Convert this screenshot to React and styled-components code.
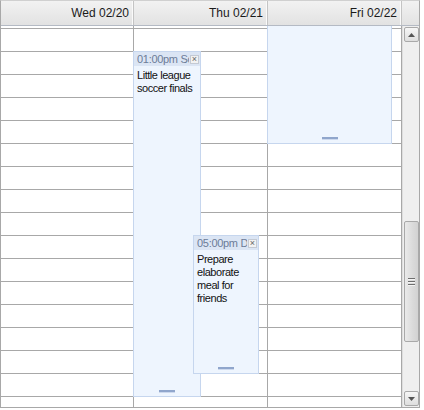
import React from "react";
import styled, {createGlobalStyle} from "styled-components";

const GlobalStyle = createGlobalStyle`
  html, body {
    margin: 0;
    padding: 0;
    background: #ffffff;
  }
  body {
    font-family: "Liberation Sans", Arial, sans-serif;
  }
`;

const ROW = 23;
const SCROLL_OFFSET = 20;

const days = [
    {label: "Wed 02/20", events: []},
    {
        label: "Thu 02/21", events: [
            {id: 1, title: "01:00pm Soccer", text: "Little league soccer finals", start: 2, rows: 15, left: -1, width: 68},
            {id: 2, title: "05:00pm Dinner", text: "Prepare elaborate meal for friends", start: 10, rows: 6, left: 59, width: 66},
        ]
    },
    {
        label: "Fri 02/22", events: [
            {id: 3, title: "", text: "", start: -1, rows: 7, left: -1, width: 125},
        ]
    },
];

const Calendar = styled.div`
  width: 420px;
  height: 408px;
  box-sizing: border-box;
  border: 1px solid #a8a8a8;
  border-top-color: #d0d0d0;
  display: flex;
  flex-direction: column;
  background: #ffffff;
  overflow: hidden;
`;

const HeaderRow = styled.div`
  display: grid;
  grid-template-columns: 133px 134px 134px 1fr;
  height: 24px;
  border-bottom: 1px solid #b4bac4;
  background: linear-gradient(to bottom, #f2f2f2, #e2e2e2);
`;

const HeaderCell = styled.div`
  display: flex;
  align-items: center;
  justify-content: flex-end;
  padding-right: 4px;
  font-size: 12px;
  color: #1a1a1a;
  white-space: nowrap;
  border-right: ${props => props.last ? 'none' : '1px solid #c4c4c4'};
  box-shadow: ${props => props.last ? 'none' : 'inset -1px 0 0 #fafafa'};
`;

const Body = styled.div`
  flex: 1;
  display: flex;
  min-height: 0;
`;

const DaysArea = styled.div`
  display: grid;
  grid-template-columns: 133px 134px 134px;
  overflow: hidden;
`;

const DayColumn = styled.div`
  position: relative;
  border-right: 1px solid #a8a8a8;
  margin-top: -${SCROLL_OFFSET}px;
`;

const Slot = styled.div`
  height: ${ROW - 1}px;
  border-bottom: 1px solid #a8a8a8;
`;

const Event = styled.div`
  position: absolute;
  box-sizing: border-box;
  border: 1px solid #c6d6ee;
  background: #eef5fe;
  display: flex;
  flex-direction: column;
  overflow: hidden;
  z-index: 1;
`;

const EventHeader = styled.div`
  display: flex;
  align-items: center;
  height: 12px;
  padding: 1px 1px 1px 3px;
  background: #dbe5f4;
  font-size: 11px;
  letter-spacing: -0.3px;
  color: #6c7c98;
  white-space: nowrap;
`;

const EventTime = styled.span`
  flex: 1;
  overflow: hidden;
  text-overflow: clip;
`;

const CloseBox = styled.span`
  width: 9px;
  height: 9px;
  margin-left: 1px;
  box-sizing: border-box;
  border: 1px solid #c4cad4;
  background: #f2f2f2;
  color: #666666;
  font-size: 9px;
  line-height: 7px;
  letter-spacing: 0;
  text-align: center;
  flex-shrink: 0;
`;

const EventText = styled.div`
  padding: 3px 2px 0 3px;
  font-size: 11px;
  line-height: 13px;
  letter-spacing: -0.45px;
  color: #111111;
`;

const ResizeHandle = styled.div`
  position: absolute;
  left: 50%;
  bottom: 3px;
  width: 16px;
  height: 2px;
  margin-left: -8px;
  background: #90a6cc;
  border-bottom: 1px solid #cdd9ee;
  box-sizing: content-box;
`;

const Scrollbar = styled.div`
  width: 17px;
  display: flex;
  flex-direction: column;
  align-items: center;
  padding: 1px 0;
  background: #efefef;
  border-left: 1px solid #dedede;
  box-sizing: border-box;
`;

const ArrowButton = styled.div`
  width: 15px;
  height: 15px;
  box-sizing: border-box;
  border: 1px solid #a9a9a9;
  border-radius: 2px;
  background: linear-gradient(to bottom, #f6f6f6, #dedede);
  display: flex;
  align-items: center;
  justify-content: center;
`;

const Track = styled.div`
  flex: 1;
  width: 100%;
  display: flex;
  flex-direction: column;
  align-items: center;
  padding-top: 179px;
  box-sizing: border-box;
`;

const Thumb = styled.div`
  width: 15px;
  height: 121px;
  box-sizing: border-box;
  border: 1px solid #a9a9a9;
  border-radius: 2px;
  background: linear-gradient(to right, #eaeaea, #dadada 60%, #d2d2d2);
  display: flex;
  flex-direction: column;
  align-items: center;
  justify-content: center;
  gap: 1px;
`;

const Grip = styled.div`
  width: 7px;
  height: 1px;
  background: #6e6e6e;
  border-bottom: 1px solid #f4f4f4;
`;

const Arrow = ({down}) => (
    <svg width="7" height="4" viewBox="0 0 7 4">
        <path d={down ? "M0 0 L7 0 L3.5 4 Z" : "M0 4 L7 4 L3.5 0 Z"} fill="#555"/>
    </svg>
);

const slots = Array.from({length: 18});

const App = () => {
    return (
        <>
            <GlobalStyle/>
            <Calendar>
                <HeaderRow>
                    {days.map(d => <HeaderCell key={d.label}>{d.label}</HeaderCell>)}
                    <HeaderCell last/>
                </HeaderRow>
                <Body>
                    <DaysArea>
                        {days.map(d => (
                            <DayColumn key={d.label}>
                                {slots.map((_, i) => <Slot key={i}/>)}
                                {d.events.map(e => (
                                    <Event
                                        key={e.id}
                                        style={{
                                            top: e.start * ROW - 1,
                                            height: e.rows * ROW + 1,
                                            left: e.left,
                                            width: e.width,
                                        }}
                                    >
                                        <EventHeader>
                                            <EventTime>{e.title}</EventTime>
                                            <CloseBox>×</CloseBox>
                                        </EventHeader>
                                        <EventText>{e.text}</EventText>
                                        <ResizeHandle/>
                                    </Event>
                                ))}
                            </DayColumn>
                        ))}
                    </DaysArea>
                    <Scrollbar>
                        <ArrowButton><Arrow/></ArrowButton>
                        <Track>
                            <Thumb>
                                <Grip/>
                                <Grip/>
                                <Grip/>
                            </Thumb>
                        </Track>
                        <ArrowButton><Arrow down/></ArrowButton>
                    </Scrollbar>
                </Body>
            </Calendar>
        </>
    );
};

export default App;
